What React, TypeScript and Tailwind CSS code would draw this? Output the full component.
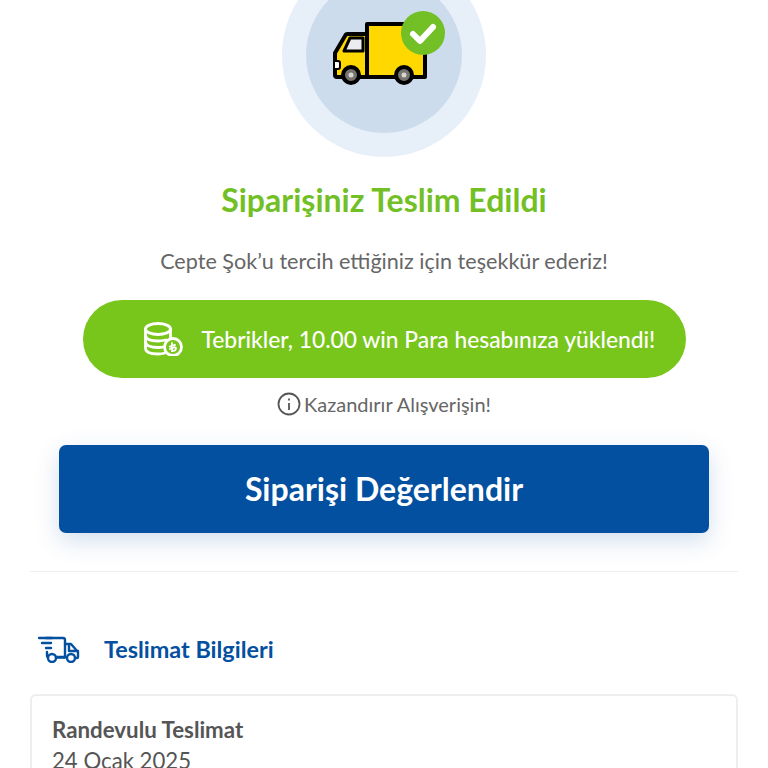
const font = { fontFamily: '"Lato", "Liberation Sans", sans-serif' };

function Truck() {
  return (
    <svg width="114" height="76" viewBox="0 0 114 76" className="mb-[13px] ml-[8px]">
      <path d="M36 13 H94 V66 H36 Z" fill="#ffd800" stroke="#000" strokeWidth="4" strokeLinejoin="round" />
      <path d="M36 23 H17 a3 3 0 0 0 -3 2 L4 42 V64 a2 2 0 0 0 2 2 H36 Z" fill="#ffd800" stroke="#000" strokeWidth="4" strokeLinejoin="round" />
      <path d="M19 27 H32 V40 H13 Z" fill="#ecebf0" stroke="#000" strokeWidth="3" strokeLinejoin="round" />
      <path d="M4 50 H7 a2 2 0 0 1 2 2 V56 a2 2 0 0 1 -2 2 H4" fill="#fff" stroke="#000" strokeWidth="2" />
      <circle cx="20" cy="64" r="8" fill="#77736f" stroke="#000" strokeWidth="4" />
      <circle cx="20" cy="64" r="2.5" fill="#d8d6d2" />
      <circle cx="73" cy="64" r="8" fill="#77736f" stroke="#000" strokeWidth="4" />
      <circle cx="73" cy="64" r="2.5" fill="#d8d6d2" />
      <circle cx="92" cy="22" r="22" fill="#72bf26" />
      <path d="M82 23 L89 30 L102 16" fill="none" stroke="#fff" strokeWidth="6" strokeLinecap="round" strokeLinejoin="round" />
    </svg>
  );
}

function Coins() {
  return (
    <svg width="40" height="34" viewBox="0 0 40 34" fill="none" stroke="#fff" strokeWidth="2.8" strokeLinecap="round">
      <ellipse cx="15" cy="7" rx="12.5" ry="5.5" />
      <path d="M2.5 7 V26 C2.5 30 8 32 15 32 C18 32 20 31.6 22 31" />
      <path d="M2.5 13.5 C3 17 8 19 15 19 C18 19 20 18.6 23 18" />
      <path d="M2.5 20 C3 23.5 8 25.5 15 25.5 C17 25.5 19 25.3 20 25" />
      <path d="M27.5 7 V16" />
      <circle cx="30" cy="25" r="8.5" />
      <path d="M29 21 V29 C31.5 29 33 27.5 33 26 M26.8 24.6 L32 22.8 M26.8 27 L32 25.2" strokeWidth="1.8" />
    </svg>
  );
}

function DeliveryIcon() {
  return (
    <svg width="42" height="28" viewBox="0 0 42 28" fill="none" stroke="#0350a0" strokeWidth="2.4" strokeLinecap="round" strokeLinejoin="round">
      <path d="M1 3 H14 M4 8 H13 M8 13 H13" />
      <path d="M8 3 H25 a2 2 0 0 1 2 2 V22 H18" />
      <path d="M27 9 H33 L40 17 V22 a1 1 0 0 1 -1 1 H37" />
      <path d="M31 10 V16 H40" />
      <path d="M9 17 V21 a1 1 0 0 0 1 1 H10" />
      <path d="M18 22.5 H27" />
      <circle cx="14" cy="23" r="4" />
      <circle cx="33" cy="23" r="4" />
    </svg>
  );
}

export default function App() {
  return (
    <div className="h-[768px] w-[768px] overflow-hidden bg-white" style={font}>
      <div className="flex flex-col items-center">
        <div className="mt-[-47px] flex h-[204px] w-[204px] items-center justify-center rounded-full bg-[#e7eff8]">
          <div className="flex h-[156px] w-[156px] items-center justify-center rounded-full bg-[#cddced]">
            <Truck />
          </div>
        </div>
        <h1 className="mt-[24px] text-[32px] leading-[38px] font-bold text-[#72bf26]">Siparişiniz Teslim Edildi</h1>
        <p className="mt-[27px] text-[21.6px] leading-[30px] text-[#666666]">Cepte Şok’u tercih ettiğiniz için teşekkür ederiz!</p>
        <div className="mt-[24px] flex h-[78px] w-[603px] items-center rounded-full bg-[#78c51c] pl-[60px] text-white">
          <Coins />
          <span className="ml-[19px] text-[22.8px] font-medium whitespace-nowrap">Tebrikler, 10.00 win Para hesabınıza yüklendi!</span>
        </div>
        <div className="mt-[13px] flex items-center gap-[3px] text-[#666666]">
          <svg width="24" height="24" viewBox="0 0 24 24" fill="none" stroke="#555555" strokeWidth="1.8">
            <circle cx="12" cy="12" r="10.5" />
            <path d="M12 11 V18 M12 6.5 V8.5" />
          </svg>
          <span className="text-[20px] leading-[26px]">Kazandırır Alışverişin!</span>
        </div>
        <button className="mt-[28px] flex h-[88px] w-[650px] items-center justify-center rounded-[7px] bg-[#0350a0] text-[32px] font-bold text-white shadow-[0_8px_24px_rgba(3,80,160,0.18)]">
          Siparişi Değerlendir
        </button>
      </div>
      <div className="mx-[30px] mt-[38px] border-t border-[#eeeeee]" />
      <div className="mt-[62px] ml-[38px] flex items-center">
        <DeliveryIcon />
        <span className="ml-[24px] text-[23.4px] leading-[30px] font-bold text-[#0350a0]">Teslimat Bilgileri</span>
      </div>
      <div className="mx-[30px] mt-[30px] rounded-[6px] border-2 border-[#eeeeee] px-[20px] pt-[18px] pb-[20px] text-[#555555]">
        <div className="text-[22.3px] leading-[31px] font-bold">Randevulu Teslimat</div>
        <div className="text-[22.2px] leading-[31px]">24 Ocak 2025</div>
      </div>
    </div>
  );
}
